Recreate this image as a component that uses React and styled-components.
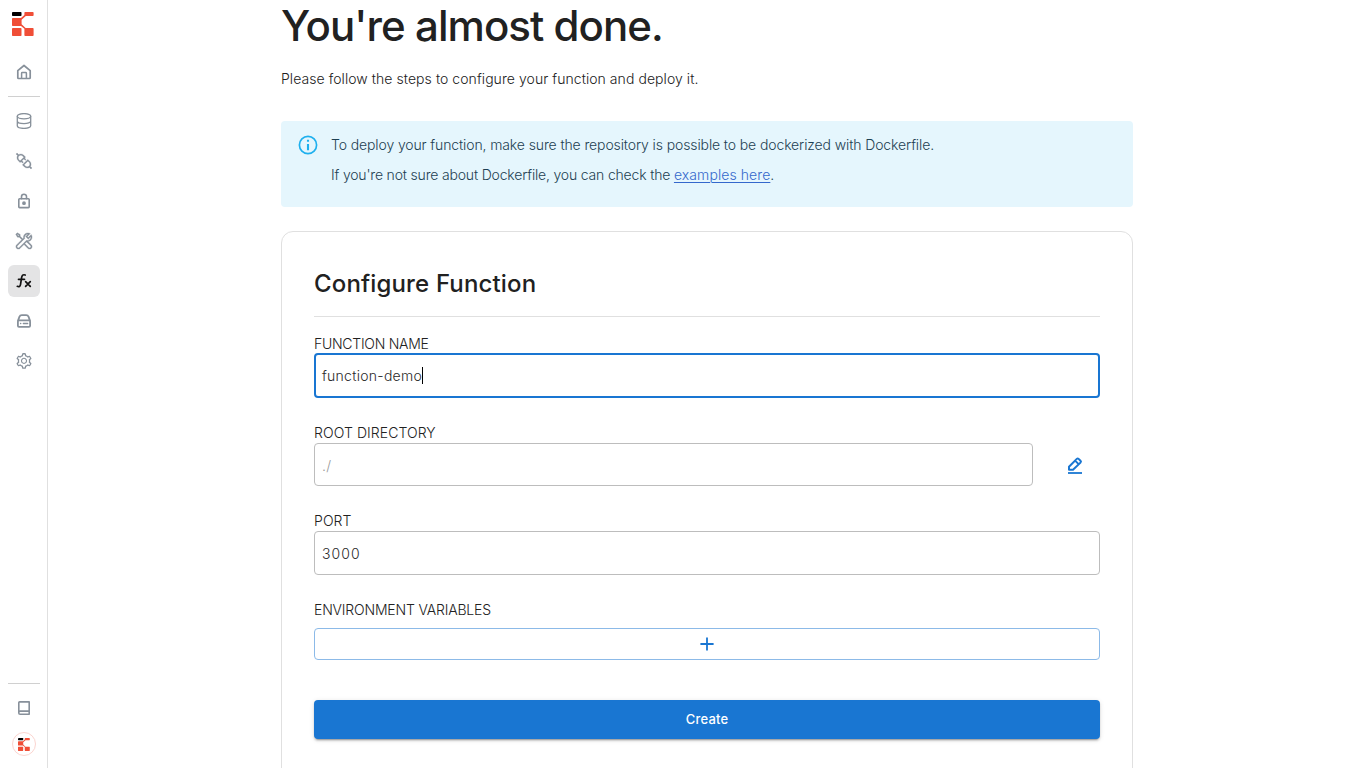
import React from 'react';
import styled, { createGlobalStyle } from 'styled-components';
import { AiOutlineSetting, AiOutlineApi } from 'react-icons/ai';
import { LiaToolsSolid } from 'react-icons/lia';

const Global = createGlobalStyle`
  *, *::before, *::after { box-sizing: border-box; }
  html, body { margin: 0; height: 100%; overflow: hidden; background: #fff; }
  body { font-family: "Inter", "Liberation Sans", sans-serif; font-size: 14px; font-weight: 300; color: #212121; }
  h1, h2, p { margin: 0; }
`;

const Page = styled.div`
  display: flex;
  height: 768px;
  overflow: hidden;
`;

const Sidebar = styled.nav`
  width: 48px;
  flex: none;
  display: flex;
  flex-direction: column;
  align-items: center;
  border-right: 1px solid #e0e0e0;
  padding: 12px 0 12px 1px;
  color: #87909a;
`;

const Brand = styled.div`
  height: 24px;
  padding-right: 2px;
  svg { display: block; }
`;

const NavButton = styled.a`
  width: 32px;
  height: 32px;
  flex: none;
  display: flex;
  align-items: center;
  justify-content: center;
  border-radius: 6px;
  background: ${(p) => (p.$active ? '#e4e4e5' : 'transparent')};
  color: ${(p) => (p.$active ? '#111' : 'inherit')};
  svg { display: block; }
`;

const HomeSlot = styled.div`
  margin: 20px 0 8px;
`;

const NavList = styled.div`
  display: flex;
  flex-direction: column;
  gap: 8px;
  margin-top: 8px;
`;

const Rule = styled.div`
  width: 32px;
  height: 1px;
  flex: none;
  background: #d0d0d0;
`;

const SidebarFooter = styled.div`
  margin-top: auto;
  display: flex;
  flex-direction: column;
  align-items: center;
`;

const BookSlot = styled.div`
  margin: 8px 0 8px;
`;

const Avatar = styled.div`
  width: 24px;
  height: 24px;
  border-radius: 50%;
  border: 1px solid #fbd5d0;
  display: flex;
  align-items: center;
  justify-content: center;
`;

const Main = styled.main`
  flex: 1;
  padding: 0 233px;
`;

const Title = styled.h1`
  height: 50px;
  font-size: 42px;
  line-height: 51px;
  font-weight: 500;
  letter-spacing: ${(p) => p.$track}px;
  white-space: nowrap;
`;

const Lead = styled.p`
  margin-top: 19px;
  line-height: 20px;
  letter-spacing: ${(p) => p.$track}px;
`;

const Notice = styled.section`
  margin-top: 32px;
  height: 86px;
  display: flex;
  gap: 12px;
  padding: 9px 16px;
  border-radius: 4px;
  background: #e5f6fd;
  svg { margin-top: 4px; flex: none; }
`;

const NoticeLine = styled.p`
  line-height: 30px;
  color: #1d3f52;
  letter-spacing: ${(p) => p.$track}px;
`;

const Link = styled.a`
  color: #3468cc;
  letter-spacing: 0.08px;
  text-decoration: underline;
  text-decoration-thickness: 1px;
  text-underline-offset: 2px;
`;

const Card = styled.section`
  margin-top: 24px;
  height: 620px;
  padding: 33px 32px;
  border: 1px solid #e0e0e0;
  border-radius: 12px;
`;

const CardTitle = styled.h2`
  height: 52px;
  line-height: 37px;
  font-size: 24px;
  font-weight: 500;
  letter-spacing: ${(p) => p.$track}px;
  border-bottom: 1px solid #e0e0e0;
`;

const Field = styled.div`
  margin-top: ${(p) => p.$top}px;
`;

const Label = styled.label`
  display: block;
  height: ${(p) => p.$h || 20}px;
  line-height: 20px;
  letter-spacing: ${(p) => p.$track}px;
`;

const Input = styled.div`
  flex: 1;
  height: ${(p) => p.$h}px;
  display: flex;
  align-items: center;
  padding: ${(p) => (p.$focused ? '0 6px 1px' : '1px 7px 0')};
  border: ${(p) => (p.$focused ? '2px solid #1976d2' : '1px solid #bdbdbd')};
  border-radius: 4px;
  color: ${(p) => (p.$placeholder ? '#999' : '#2a2a2a')};
  letter-spacing: ${(p) => p.$track}px;
`;

const Caret = styled.span`
  width: 1px;
  height: 17px;
  background: #000;
`;

const InputRow = styled.div`
  display: flex;
`;

const EditButton = styled.div`
  width: 67px;
  padding-left: 16px;
  display: flex;
  align-items: center;
  justify-content: center;
`;

const AddButton = styled.div`
  margin-top: 8px;
  height: 32px;
  display: flex;
  align-items: center;
  justify-content: center;
  border: 1px solid #8cbae8;
  border-radius: 4px;
`;

const CreateButton = styled.div`
  margin-top: 40px;
  height: 39px;
  display: flex;
  align-items: center;
  justify-content: center;
  padding-bottom: 1px;
  border-radius: 4px;
  background: #1976d2;
  color: #fff;
  font-size: 13px;
  font-weight: 500;
  letter-spacing: ${(p) => p.$track}px;
  box-shadow: 0 3px 1px -2px rgba(0,0,0,.2), 0 2px 2px rgba(0,0,0,.14), 0 1px 5px rgba(0,0,0,.12);
`;

const Logo = ({ width, height }) => (
  <svg width={width} height={height} viewBox="0 0 22 24">
    <rect x="0" y="0" width="9.5" height="4" rx="0.8" fill="#000" />
    <path d="M13.2 0h7.6q.8 0 .8.8v2.4q0 .8-.8.8h-7L9.6 7.8v4.4l4 3.8h7.2q.8 0 .8.8v6.4q0 .8-.8.8h-7.6q-.8 0-.8-.8v-6.4L9 14H.8q-.8 0-.8-.8V6.8Q0 6 .8 6H9l3.4-3V.8q0-.8.8-.8z" fill="#f04e37" />
    <rect x="0" y="16" width="9.5" height="8" rx="0.8" fill="#f04e37" />
  </svg>
);

const Stroke = ({ size = 16, w = 1.5, children, color = 'currentColor' }) => (
  <svg width={size} height={size} viewBox={`0 0 ${size} ${size}`} fill="none" stroke={color} strokeWidth={w} strokeLinejoin="round" strokeLinecap="round">{children}</svg>
);

const HomeIcon = () => (
  <Stroke w={1.7}><path d="M1.8 6.7 8 1.5l6.2 5.2v7q0 .8-.8.8H2.6q-.8 0-.8-.8z" /><path d="M5.6 14.3V9.2q0-.7.7-.7h3.4q.7 0 .7.7v5.1" strokeWidth="1.5" /></Stroke>
);
const DatabaseIcon = () => (
  <Stroke w={1.3}><ellipse cx="8" cy="3.2" rx="6.7" ry="2.6" /><path d="M1.3 3.2v9.6c0 1.5 3 2.6 6.7 2.6s6.7-1.1 6.7-2.6V3.2M1.3 8c0 1.5 3 2.6 6.7 2.6s6.7-1.1 6.7-2.6" /></Stroke>
);
const LockIcon = () => (
  <Stroke w={1.6}><rect x="2.8" y="5.8" width="10.4" height="8.8" rx="0.8" /><path d="M5.5 5.6V3.7a2.5 2.5 0 0 1 5 0v1.9" /><circle cx="8" cy="10.2" r="1.1" fill="currentColor" /></Stroke>
);
const FxIcon = () => (
  <Stroke w={1.7}><path d="M9.2 2C7 1.2 6 2.3 5.6 4.7L4.5 11.6C4.2 13.5 3 14.1 1.3 13.3M2.5 6.3h6M9.6 8.6l4.7 4.8M14.3 8.6l-4.7 4.8" /></Stroke>
);
const StorageIcon = () => (
  <Stroke w={1.8}><path d="M1.9 7.8 3.5 3.7Q4 2.2 5.8 2.2h4.4q1.8 0 2.3 1.5l1.6 4.1M3 7.3h10q1.1 0 1.1 1.1v4.3q0 1.1-1.1 1.1H3q-1.1 0-1.1-1.1V8.4q0-1.1 1.1-1.1z" /><path d="M4.6 10.6h.1M7.4 10.6h4.2" strokeWidth="1.5" /></Stroke>
);
const BookIcon = () => (
  <Stroke w={1.6}><path d="M3.6 1.9h9.6v12.3H4.1q-1.3 0-1.3-1.3V2.7q0-.8.8-.8zM2.8 12.2q.2-1.1 1.3-1.1h9.1" /></Stroke>
);
const InfoIcon = () => (
  <svg width="22" height="22" viewBox="1 1 22 22" fill="#1eb0ee"><path d="M11 7h2v2h-2zm0 4h2v6h-2zm1-8a9 9 0 1 0 0 18 9 9 0 0 0 0-18zm0 16.4a7.4 7.4 0 1 1 0-14.8 7.4 7.4 0 0 1 0 14.8z" transform="translate(12 12) scale(1.05) translate(-12 -12)" /></svg>
);
const EditIcon = () => (
  <Stroke size={18} w={2} color="#1976d2"><path d="M3 13.6v-2.8l7.8-7.9q.9-.9 1.8 0l1.9 1.9q.9.9 0 1.8l-7.5 7.2H3zM9.4 4.9l3.2 3.2" /><path d="M2 17h14" strokeWidth="1.8" strokeLinecap="butt" /></Stroke>
);
const PlusIcon = () => (
  <Stroke size={14} w={1.8} color="#1976d2"><path d="M7 .4v13.2M.4 7h13.2" strokeLinecap="butt" /></Stroke>
);

const PlugIcon = styled(AiOutlineApi)`
  transform: rotate(90deg);
  stroke: currentColor;
  stroke-width: 12px;
`;

const ToolsIcon = styled(LiaToolsSolid)`
  stroke: currentColor;
  stroke-width: 0.5px;
`;

const navItems = [
  { id: 'data', icon: <DatabaseIcon /> },
  { id: 'connections', icon: <PlugIcon size={20} /> },
  { id: 'auth', icon: <LockIcon /> },
  { id: 'tools', icon: <ToolsIcon size={20} /> },
  { id: 'functions', icon: <FxIcon />, active: true },
  { id: 'storage', icon: <StorageIcon /> },
  { id: 'settings', icon: <AiOutlineSetting size={18} /> },
];

export default function App() {
  return (
    <Page>
      <Global />
      <Sidebar>
        <Brand><Logo width={22} height={24} /></Brand>
        <HomeSlot><NavButton><HomeIcon /></NavButton></HomeSlot>
        <Rule />
        <NavList>
          {navItems.map((n) => <NavButton key={n.id} $active={n.active}>{n.icon}</NavButton>)}
        </NavList>
        <SidebarFooter>
          <Rule />
          <BookSlot><NavButton><BookIcon /></NavButton></BookSlot>
          <Avatar><Logo width={12} height={15} /></Avatar>
        </SidebarFooter>
      </Sidebar>
      <Main>
        <Title $track={-0.95}>You're almost done.</Title>
        <Lead $track={0.06}>Please follow the steps to configure your function and deploy it.</Lead>
        <Notice>
          <InfoIcon />
          <div>
            <NoticeLine $track={-0.115}>To deploy your function, make sure the repository is possible to be dockerized with Dockerfile.</NoticeLine>
            <NoticeLine $track={-0.18}>If you're not sure about Dockerfile, you can check the <Link>examples here</Link>.</NoticeLine>
          </div>
        </Notice>
        <Card>
          <CardTitle $track={0.15}>Configure Function</CardTitle>
          <Field $top={17}>
            <Label $track={-0.27} $h={19}>FUNCTION NAME</Label>
            <Input $h={45} $focused $track={0.27}>function-demo<Caret /></Input>
          </Field>
          <Field $top={25}>
            <Label $track={0.08}>ROOT DIRECTORY</Label>
            <InputRow>
              <Input $h={43} $placeholder $track={0.4}>./</Input>
              <EditButton><EditIcon /></EditButton>
            </InputRow>
          </Field>
          <Field $top={25}>
            <Label $track={0.1}>PORT</Label>
            <Input $h={44} $track={1.1}>3000</Input>
          </Field>
          <Field $top={25}>
            <Label $track={-0.18}>ENVIRONMENT VARIABLES</Label>
            <AddButton><PlusIcon /></AddButton>
          </Field>
          <CreateButton $track={0.2}>Create</CreateButton>
        </Card>
      </Main>
    </Page>
  );
}
